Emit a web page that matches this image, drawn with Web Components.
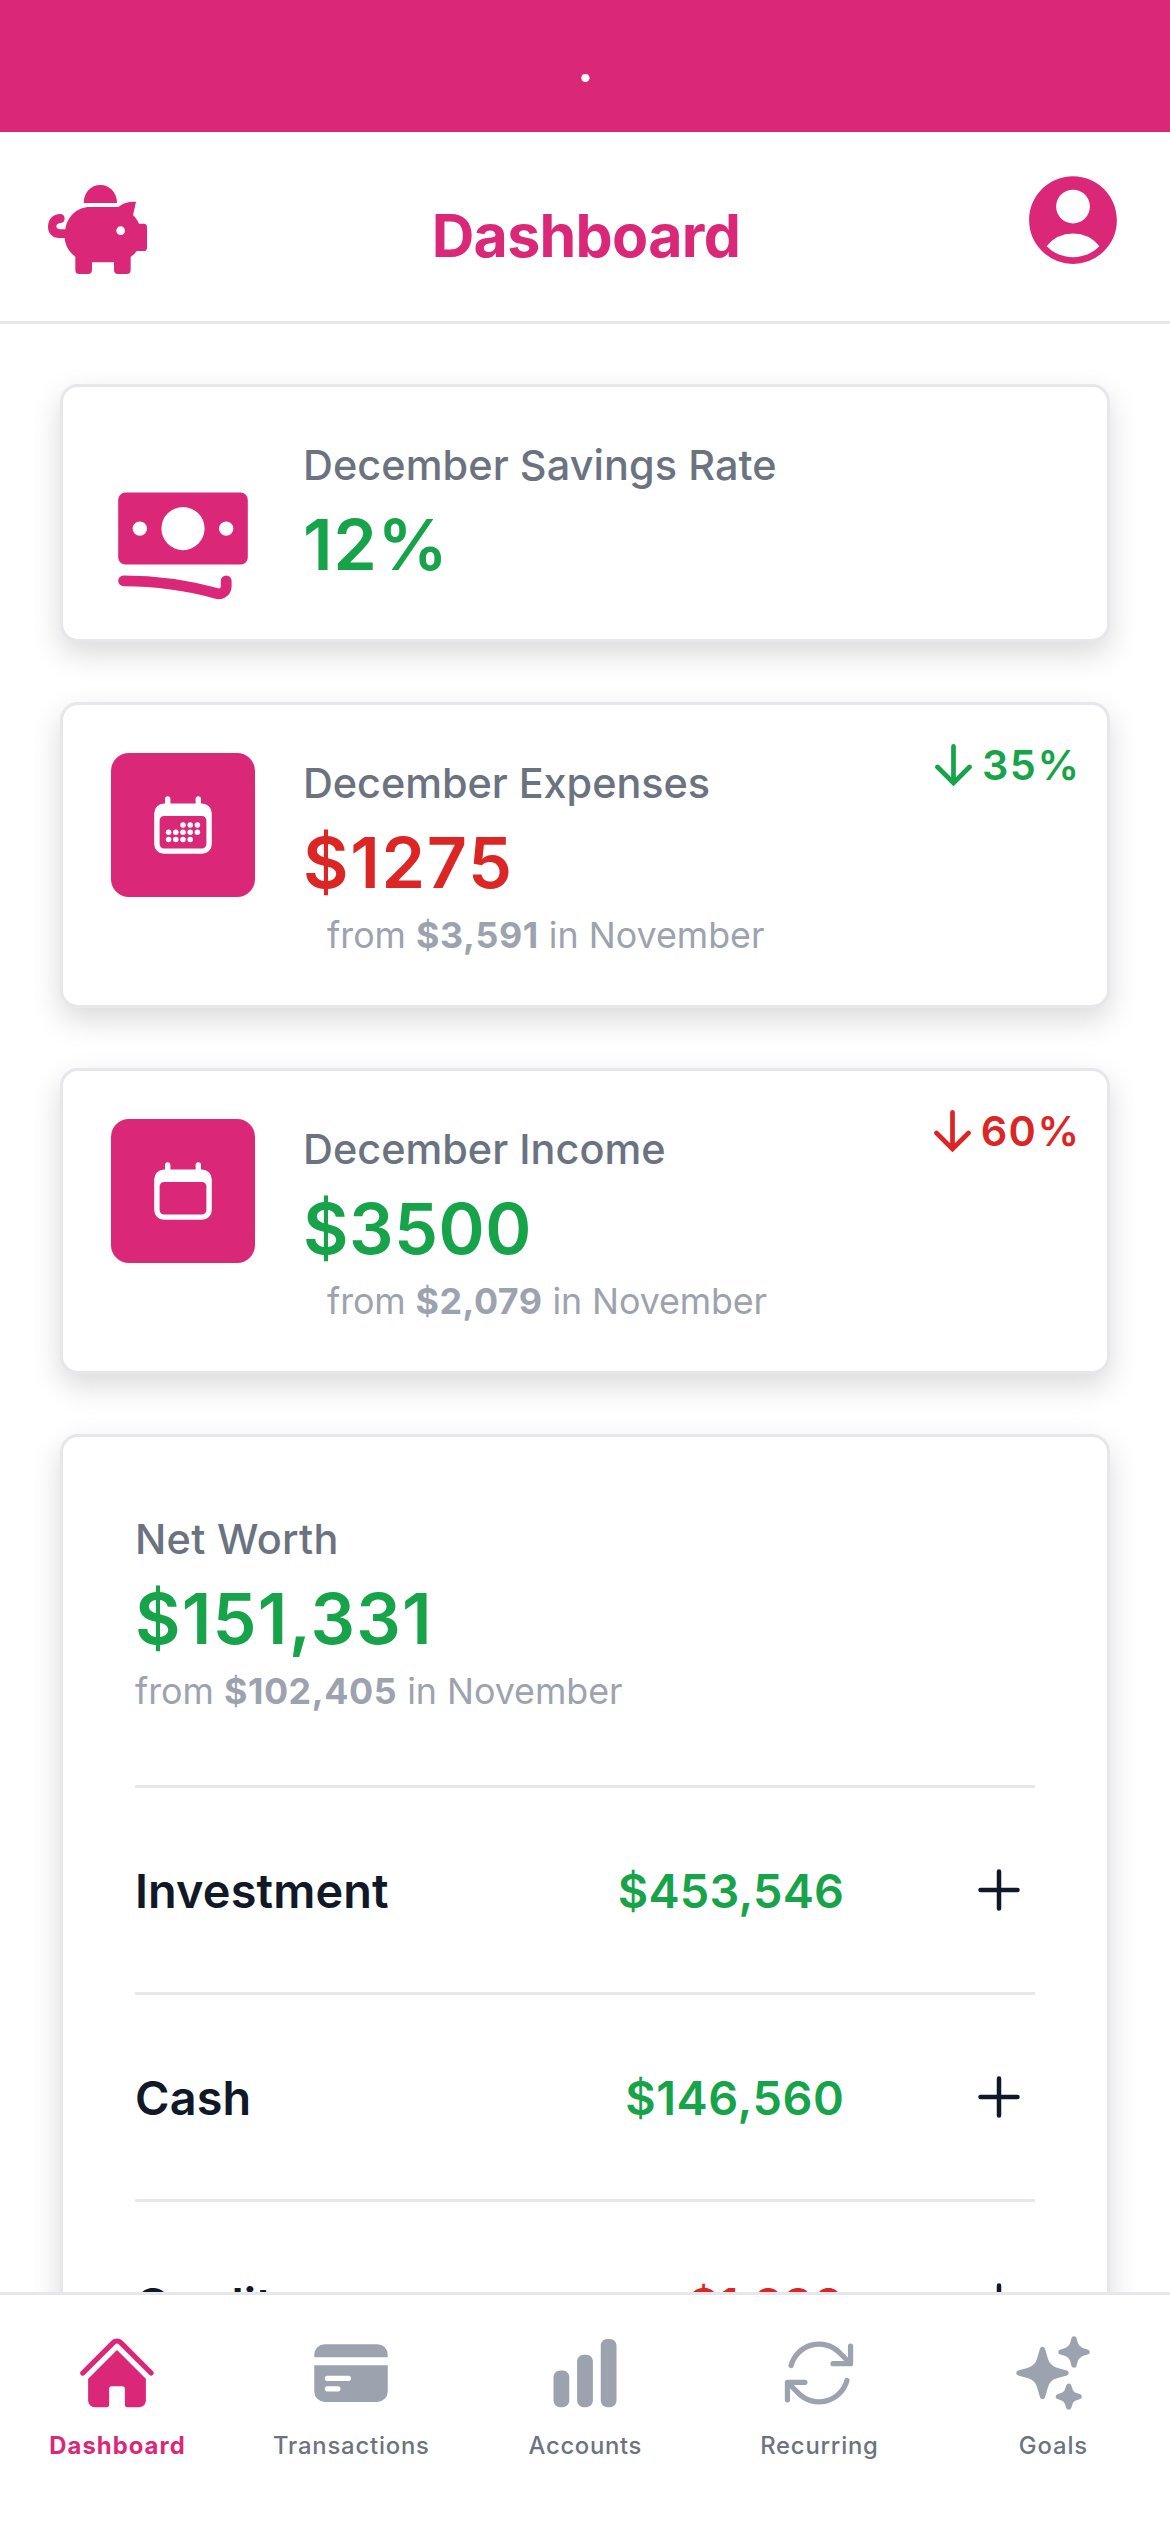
<!DOCTYPE html>
<html lang="en">
<head>
<meta charset="utf-8">
<title>Dashboard</title>
<style>
  html, body { margin: 0; background: #fff; }
  body {
    width: 1170px; height: 2532px; overflow: hidden;
    font-family: Inter, "Liberation Sans", sans-serif;
    --pink: #db2777; --green: #16a34a; --red: #dc2626;
    --gray4: #9ca3af; --gray5: #6b7280; --ink: #111827; --line: #e5e7eb;
  }
</style>
</head>
<body>
<app-screen>
  <status-bar slot="top">.</status-bar>
  <app-header slot="top" heading="Dashboard"></app-header>

  <stat-card icon="banknotes" plain label="December Savings Rate" label-width="469.3" value="12%" value-width="135.5" tone="green"></stat-card>
  <stat-card icon="calendarDays" label="December Expenses" label-width="402.8" value="$1275" value-width="203" tone="red" change="35%" change-width="91.5" change-tone="green">
    <fit-text size="35.8" line="48" width="437" weight="400">from <b>$3,591</b> in November</fit-text>
  </stat-card>
  <stat-card icon="calendar" label="December Income" label-width="358.2" value="$3500" value-width="222.3" tone="green" change="60%" change-width="92.8" change-tone="red">
    <fit-text size="35.8" line="48" width="439.6" weight="400">from <b>$2,079</b> in November</fit-text>
  </stat-card>
  <net-worth>
    <fit-text slot="note" size="35.8" line="48" width="487" weight="400">from <b>$102,405</b> in November</fit-text>
    <account-row name="Investment" name-width="250" amount="$453,546" amount-width="222.2" tone="green"></account-row>
    <account-row name="Cash" name-width="111.5" amount="$146,560" amount-width="215" tone="green"></account-row>
    <account-row name="Credit" name-width="135" amount="$1,280" amount-width="152" tone="red"></account-row>
  </net-worth>

  <tab-bar slot="bottom">
    <tab-item icon="home" label="Dashboard" width="133.3" active></tab-item>
    <tab-item icon="card" label="Transactions" width="154"></tab-item>
    <tab-item icon="chart" label="Accounts" width="112"></tab-item>
    <tab-item icon="refresh" label="Recurring" width="116"></tab-item>
    <tab-item icon="sparkles" label="Goals" width="66.5"></tab-item>
  </tab-bar>
</app-screen>

<script>
const ICONS = {
  pig: ['54 75 297 267', '<path d="M161 129C161 98 183 75 211 75C239 75 261 98 261 129Z"/><path fill-rule="evenodd" d="M180 141H265C278 129 297 124 318 125L309 166C317 173 323 182 327 191H341Q351 191 351 201V263Q351 273 341 273H320C315 280 309 286 302 291V330Q302 342 290 342H264Q252 342 252 330V307H186V330Q186 342 174 342H148Q136 342 136 330V290C117 275 106 258 104 234H88C68 234 54 220 54 201C54 177 70 162 90 162C99 162 104 168 104 176C104 184 98 189 90 189C83 190 79 194 79 199C79 204 84 208 91 208H106C112 170 140 141 180 141ZM259 212a13 13 0 1 0 26 0a13 13 0 1 0-26 0Z"/>'],
  user: ['0 0 24 24', '<path fill-rule="evenodd" d="M18.685 19.097A9.723 9.723 0 0 0 21.75 12c0-5.385-4.365-9.75-9.75-9.75S2.25 6.615 2.25 12a9.723 9.723 0 0 0 3.065 7.097A9.716 9.716 0 0 0 12 21.75a9.716 9.716 0 0 0 6.685-2.653Zm-12.54-1.285A7.486 7.486 0 0 1 12 15a7.486 7.486 0 0 1 5.855 2.812A8.224 8.224 0 0 1 12 20.25a8.224 8.224 0 0 1-5.855-2.438ZM15.75 9a3.75 3.75 0 1 1-7.5 0 3.75 3.75 0 0 1 7.5 0Z"/>'],
  banknotes: ['0 0 20 20', '<path fill-rule="evenodd" d="M1 4a1 1 0 011-1h16a1 1 0 011 1v8a1 1 0 01-1 1H2a1 1 0 01-1-1V4zm12 4a3 3 0 11-6 0 3 3 0 016 0zM4 9a1 1 0 100-2 1 1 0 000 2zm13-1a1 1 0 11-2 0 1 1 0 012 0zM1.75 14.5a.75.75 0 000 1.5c4.417 0 8.693.603 12.749 1.73 1.111.309 2.251-.512 2.251-1.696v-.784a.75.75 0 00-1.5 0v.784a.272.272 0 01-.35.25A49.043 49.043 0 001.75 14.5z"/>'],
  calendar: ['0 0 20 20', '<path fill-rule="evenodd" d="M5.75 2a.75.75 0 01.75.75V4h7V2.75a.75.75 0 011.5 0V4h.25A2.75 2.75 0 0118 6.75v8.5A2.75 2.75 0 0115.25 18H4.75A2.75 2.75 0 012 15.25v-8.5A2.75 2.75 0 014.75 4H5V2.75A.75.75 0 015.75 2zm-1 5.5c-.69 0-1.25.56-1.25 1.25v6.5c0 .69.56 1.25 1.25 1.25h10.5c.69 0 1.25-.56 1.25-1.25v-6.5c0-.69-.56-1.25-1.25-1.25H4.75z"/>'],
  arrow: ['0 0 37 42', '<path fill="none" stroke="currentColor" stroke-width="4.7" stroke-linecap="round" d="M18.5 2.4V38.5M2.5 23L18.5 39L34.5 23"/>'],
  plus: ['0 0 42 42', '<path fill="none" stroke="currentColor" stroke-width="4.5" stroke-linecap="round" d="M21 2.5V39.5M2.5 21H39.5"/>'],
  home: ['0 0 24 24', '<path d="M11.47 3.841a.75.75 0 0 1 1.06 0l8.69 8.69a.75.75 0 1 0 1.061-1.061l-8.689-8.69a2.25 2.25 0 0 0-3.182 0l-8.69 8.69a.75.75 0 1 0 1.061 1.06l8.69-8.689Z"/><path d="m12 5.432 8.159 8.159c.03.03.06.058.091.086v6.198c0 1.035-.84 1.875-1.875 1.875H15a.75.75 0 0 1-.75-.75v-4.5a.75.75 0 0 0-.75-.75h-3a.75.75 0 0 0-.75.75V21a.75.75 0 0 1-.75.75H5.625a1.875 1.875 0 0 1-1.875-1.875v-6.198a2.29 2.29 0 0 0 .091-.086L12 5.432Z"/>'],
  card: ['0 0 24 24', '<path d="M4.5 3.75a3 3 0 0 0-3 3v.75h21v-.75a3 3 0 0 0-3-3h-15Z"/><path fill-rule="evenodd" d="M22.5 9.75h-21v7.5a3 3 0 0 0 3 3h15a3 3 0 0 0 3-3v-7.5Zm-18 3.75a.75.75 0 0 1 .75-.75h6a.75.75 0 0 1 0 1.5h-6a.75.75 0 0 1-.75-.75Zm.75 2.25a.75.75 0 0 0 0 1.5h3a.75.75 0 0 0 0-1.5h-3Z"/>'],
  chart: ['0 0 24 24', '<path d="M18.375 2.25c-1.035 0-1.875.84-1.875 1.875v15.75c0 1.035.84 1.875 1.875 1.875h.75c1.035 0 1.875-.84 1.875-1.875V4.125c0-1.036-.84-1.875-1.875-1.875h-.75ZM9.75 8.625c0-1.036.84-1.875 1.875-1.875h.75c1.036 0 1.875.84 1.875 1.875v11.25c0 1.035-.84 1.875-1.875 1.875h-.75a1.875 1.875 0 0 1-1.875-1.875V8.625ZM3 13.125c0-1.036.84-1.875 1.875-1.875h.75c1.036 0 1.875.84 1.875 1.875v6.75c0 1.035-.84 1.875-1.875 1.875h-.75A1.875 1.875 0 0 1 3 19.875v-6.75Z"/>'],
  refresh: ['0 0 24 24', '<path fill-rule="evenodd" d="M4.755 10.059a7.5 7.5 0 0 1 12.548-3.364l1.903 1.903h-3.183a.75.75 0 1 0 0 1.5h4.992a.75.75 0 0 0 .75-.75V4.356a.75.75 0 0 0-1.5 0v3.18l-1.9-1.9A9 9 0 0 0 3.306 9.67a.75.75 0 1 0 1.45.388Zm15.408 3.352a.75.75 0 0 0-.919.53 7.5 7.5 0 0 1-12.548 3.364l-1.902-1.903h3.183a.75.75 0 0 0 0-1.5H2.984a.75.75 0 0 0-.75.75v4.992a.75.75 0 0 0 1.5 0v-3.18l1.9 1.9a9 9 0 0 0 15.059-4.035.75.75 0 0 0-.53-.918Z"/>'],
  sparkles: ['0 0 24 24', '<path fill-rule="evenodd" d="M9 4.5a.75.75 0 0 1 .721.544l.813 2.846a3.75 3.75 0 0 0 2.576 2.576l2.846.813a.75.75 0 0 1 0 1.442l-2.846.813a3.75 3.75 0 0 0-2.576 2.576l-.813 2.846a.75.75 0 0 1-1.442 0l-.813-2.846a3.75 3.75 0 0 0-2.576-2.576l-2.846-.813a.75.75 0 0 1 0-1.442l2.846-.813A3.75 3.75 0 0 0 7.466 7.89l.813-2.846A.75.75 0 0 1 9 4.5ZM18 1.5a.75.75 0 0 1 .728.568l.258 1.036c.236.94.97 1.674 1.91 1.91l1.036.258a.75.75 0 0 1 0 1.456l-1.036.258c-.94.236-1.674.97-1.91 1.91l-.258 1.036a.75.75 0 0 1-1.456 0l-.258-1.036a2.625 2.625 0 0 0-1.91-1.91l-1.036-.258a.75.75 0 0 1 0-1.456l1.036-.258a2.625 2.625 0 0 0 1.91-1.91l.258-1.036A.75.75 0 0 1 18 1.5ZM16.5 15a.75.75 0 0 1 .712.513l.394 1.183c.15.447.5.799.948.948l1.183.395a.75.75 0 0 1 0 1.422l-1.183.395c-.447.15-.799.5-.948.948l-.395 1.183a.75.75 0 0 1-1.422 0l-.395-1.183a1.5 1.5 0 0 0-.948-.948l-1.183-.395a.75.75 0 0 1 0-1.422l1.183-.395c.447-.15.799-.5.948-.948l.395-1.183A.75.75 0 0 1 16.5 15Z"/>']
};
// Same calendar with a grid of day dots: rows at 10, 12 and 14.
const DAYS = [[10,10],[12,10],[14,10],[6,12],[8,12],[10,12],[12,12],[14,12],[6,14],[8,14],[10,14],[12,14]];
ICONS.calendarDays = ['0 0 20 20', ICONS.calendar[1] + DAYS.map(([x, y]) => `<circle cx="${x}" cy="${y}" r=".77"/>`).join('')];

class Base extends HTMLElement {
  connectedCallback() {
    if (this.shadowRoot) return;
    this.attachShadow({ mode: 'open' }).innerHTML = this.render();
    this.ready();
  }
  ready() {}
  a(n, d = '') { return this.getAttribute(n) ?? d; }
}
const define = (name, cls) => customElements.define(name, cls);

define('app-icon', class extends Base {
  render() {
    const [box, body] = ICONS[this.a('name')];
    return `<style>:host{display:block;flex:none;width:${this.a('w')}px;height:${this.a('h', this.a('w'))}px}svg{display:block;width:100%;height:100%}</style>
      <svg viewBox="${box}" fill="currentColor" aria-hidden="true">${body}</svg>`;
  }
});

// One line of text, tracked so that its glyphs span the given width.
// Bold runs get slightly looser tracking than the rest of the line.
define('fit-text', class extends Base {
  render() {
    return `<style>:host{display:block;white-space:nowrap;font-size:${this.a('size')}px;line-height:${this.a('line')}px;font-weight:${this.a('weight')}}
      span{display:inline-block}::slotted(b){font-weight:700;letter-spacing:calc(var(--gap, 0px) + .6px)}</style><span><slot></slot></span>`;
  }
  ready() {
    const span = this.shadowRoot.querySelector('span');
    const text = this.textContent, cx = document.createElement('canvas').getContext('2d');
    cx.font = `${this.a('weight')} ${this.a('size')}px Inter`;
    const first = cx.measureText(text[0]), last = cx.measureText(text.at(-1));
    const left = -first.actualBoundingBoxLeft, right = last.width - last.actualBoundingBoxRight;
    const gap = (Number(this.a('width')) + left + right - span.getBoundingClientRect().width) / (text.length - 1);
    span.style.setProperty('--gap', gap.toFixed(3) + 'px');
    span.style.letterSpacing = gap.toFixed(3) + 'px';
    span.style.marginRight = (-gap).toFixed(3) + 'px';
  }
});

define('app-screen', class extends Base {
  render() {
    return `<style>:host{display:flex;flex-direction:column;width:1170px;height:2532px;overflow:hidden;background:#fff}
      main{flex:1;min-height:0;overflow:hidden;display:flex;flex-direction:column;gap:60px;padding:60px 60px 0;box-sizing:border-box}</style>
      <slot name="top"></slot><main><slot></slot></main><slot name="bottom"></slot>`;
  }
});

define('status-bar', class extends Base {
  render() {
    return `<style>:host{display:flex;flex:none;justify-content:center;height:132px;box-sizing:border-box;padding:32px 0 0 1px;background:var(--pink);color:#fff;font:700 54px/60px Lato,sans-serif}</style><slot></slot>`;
  }
});

define('app-header', class extends Base {
  render() {
    return `<style>:host{display:grid;flex:none;grid-template-columns:1fr auto 1fr;align-items:start;height:192px;box-sizing:border-box;padding:34px 43.5px 0 48px;border-bottom:3px solid var(--line);color:var(--pink)}
      .logo{margin-top:19px}.title{margin:27.6px 2px 0 0}.user{justify-self:end}</style>
      <app-icon class="logo" name="pig" w="99" h="89"></app-icon>
      <fit-text class="title" size="59" line="84" weight="700" width="303">${this.a('heading')}</fit-text>
      <app-icon class="user" name="user" w="108"></app-icon>`;
  }
});

const CARD = `box-sizing:border-box;flex:none;background:#fff;border:3px solid var(--line);border-radius:18px;box-shadow:0 12px 30px rgba(0,0,0,.15)`;

define('stat-card', class extends Base {
  render() {
    const plain = this.hasAttribute('plain');
    return `<style>:host{display:flex;gap:48px;height:${plain ? 258 : 306}px;padding:48px;${CARD}}
      .tile{display:flex;flex:none;align-items:center;justify-content:center;width:144px;height:144px;border-radius:18px;background:var(--pink);color:#fff}
      .bare{margin-top:36px;color:var(--pink)}
      .body{flex:1;display:flex;flex-direction:column}
      .label{color:var(--gray5)}.value{color:var(--${this.a('tone')})}
      ::slotted(*){margin:-1px 0 0 24px;color:var(--gray4)}
      .change{display:flex;align-items:center;gap:9.5px;height:60px;margin:-18px -20px 0 0;color:var(--${this.a('change-tone')})}</style>
      ${plain ? `<app-icon class="bare" name="${this.a('icon')}" w="144"></app-icon>` : `<div class="tile"><app-icon name="${this.a('icon')}" w="72"></app-icon></div>`}
      <div class="body">
        <fit-text class="label" size="41.4" line="60" weight="500" width="${this.a('label-width')}">${this.a('label')}</fit-text>
        <fit-text class="value" size="70" line="99" weight="600" width="${this.a('value-width')}">${this.a('value')}</fit-text>
        <slot></slot>
      </div>
      ${this.a('change') ? `<div class="change"><app-icon name="arrow" w="37" h="42"></app-icon><fit-text size="41.4" line="60" weight="600" width="${this.a('change-width')}">${this.a('change')}</fit-text></div>` : ''}`;
  }
});

define('net-worth', class extends Base {
  render() {
    return `<style>:host{display:flex;flex-direction:column;height:1100px;padding:72px;${CARD}}
      .label{color:var(--gray5)}.value{color:var(--green)}
      ::slotted([slot=note]){margin:-1px 0 0;color:var(--gray4)}
      .rows{margin-top:70px}</style>
      <fit-text class="label" size="41.4" line="60" weight="500" width="197.5">Net Worth</fit-text>
      <fit-text class="value" size="70" line="99" weight="600" width="289">$151,331</fit-text>
      <slot name="note"></slot>
      <div class="rows"><slot></slot></div>`;
  }
});

define('account-row', class extends Base {
  render() {
    return `<style>:host{display:flex;align-items:center;height:207px;box-sizing:border-box;border-top:3px solid var(--line);color:var(--ink)}
      fit-text{padding-top:2px}
      .name{flex:1}.amount{color:var(--${this.a('tone')});margin-right:134px}.plus{margin-right:15px}</style>
      <fit-text class="name" size="46.8" line="72" weight="600" width="${this.a('name-width')}">${this.a('name')}</fit-text>
      <fit-text class="amount" size="46.8" line="72" weight="600" width="${this.a('amount-width')}">${this.a('amount')}</fit-text>
      <app-icon class="plus" name="plus" w="42"></app-icon>`;
  }
});

define('tab-bar', class extends Base {
  render() {
    return `<style>:host{display:flex;flex:none;height:240px;box-sizing:border-box;border-top:3px solid var(--line);background:#fff;position:relative}</style><slot></slot>`;
  }
});

define('tab-item', class extends Base {
  render() {
    const on = this.hasAttribute('active');
    return `<style>:host{display:flex;flex:1;flex-direction:column;align-items:center;gap:13px;padding-top:36px;color:var(${on ? '--pink' : '--gray4'})}
      fit-text{color:var(${on ? '--pink' : '--gray5'})}</style>
      <app-icon name="${this.a('icon')}" w="84"></app-icon>
      <fit-text size="23.8" line="36" weight="${on ? 700 : 500}" width="${this.a('width')}">${this.a('label')}</fit-text>`;
  }
});
</script>
</body>
</html>
